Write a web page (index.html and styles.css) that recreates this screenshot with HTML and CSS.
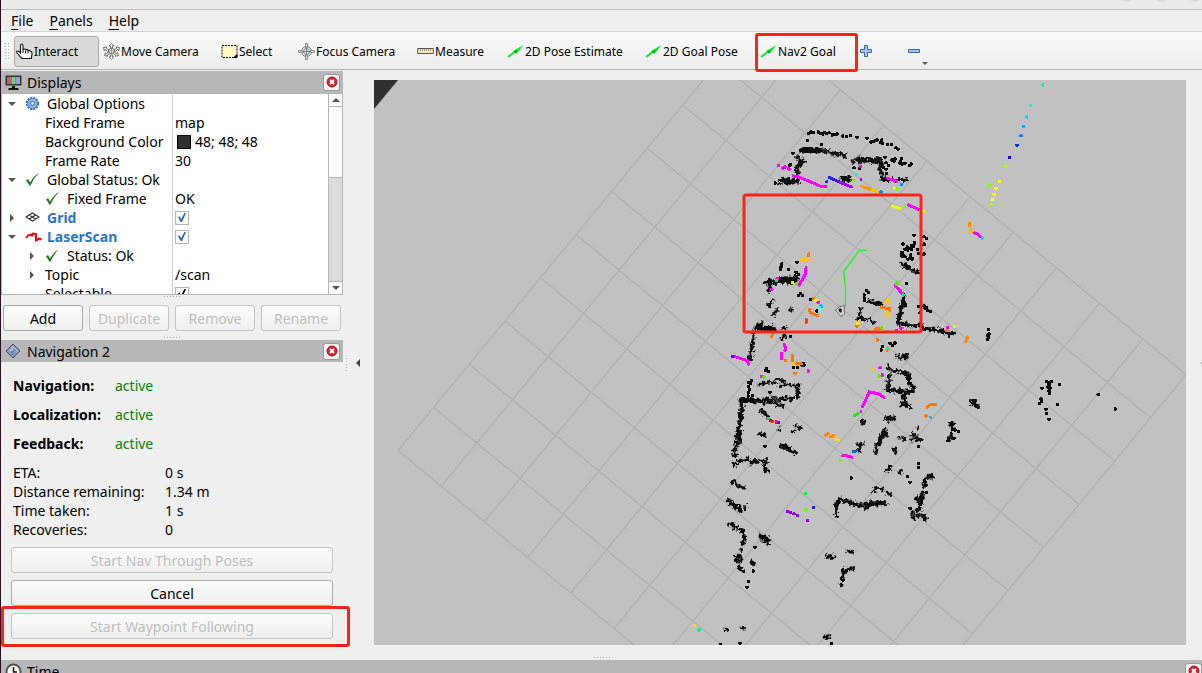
FILE: index.html
```html
<!DOCTYPE html>
<html lang="en">
<head>
<meta charset="utf-8">
<title>RViz</title>
<link rel="stylesheet" href="styles.css">
</head>
<body>
<div class="titlebar"><i></i><i></i><i></i></div>
<nav class="menubar">
  <button type="button"><u>F</u>ile</button>
  <button type="button"><u>P</u>anels</button>
  <button type="button"><u>H</u>elp</button>
</nav>
<div class="toolbar">
  <span class="grip"></span>
  <button type="button" class="tool pressed">
    <svg class="tool-icon" viewBox="0 0 17 17"><path d="M4.500 10V2.500q0-1.500 1.200-1.500t1.300 1.500V7q0-1 1.200-1t1.300 1v.6q0-1 1.200-1t1.300 1v.6q0-.9 1.200-.9t1.200 1q1.600.300 1.600 2l-.6 5.200H6L3.500 13 .8 9.500q-.4-1.200.7-1.500t1.800.7z" fill="#fff" stroke="#111" stroke-width="1.100"/><path d="M7 7v3M9.500 8v2.500M12 8v2.500" stroke="#111"/></svg>Interact</button>
  <button type="button" class="tool">
    <svg class="tool-icon" viewBox="0 0 17 17"><g fill="#f4f4f4" stroke="#555" stroke-width=".8"><path d="M8.500.5 11 3H9.500v2h-2V3H6zM8.500 16.500 11 14H9.500v-2h-2v2H6zM.5 4.500l3.500-.5-.8 1.200L6 7 5 8.500 2 6.500 1.300 8zM16.500 4.500 13 4l.8 1.200L11 7l1 1.500 3-2 .7 1.500zM1.500 12.500l1-3 .8 1.200L6 9l1 1.500-2.800 1.700.8 1zM15.500 12.500l-1-3-.8 1.200L11 9l-1 1.500 2.800 1.700-.8 1z"/><circle cx="8.500" cy="8" r="2.800"/></g><path d="M5.700 8h5.600M8.500 5.200v5.600" stroke="#777" stroke-width=".7"/></svg>Move Camera</button>
  <button type="button" class="tool">
    <svg class="tool-icon" viewBox="0 0 17 17"><path d="M1 2.500h15v12H1z" fill="#fdf8bd" stroke="#111" stroke-dasharray="2 1"/><path d="M13 14.500h3v-3z" stroke="#000"/></svg>Select</button>
  <button type="button" class="tool">
    <svg class="tool-icon" viewBox="0 0 17 17"><g fill="none" stroke="#777"><circle cx="8.500" cy="8.500" r="5"/><circle cx="8.500" cy="8.500" r="3"/><path d="M5 8.500h7M8.500 5v7"/></g><path d="M7.500.5h2v4h-2zM7.500 12.500h2v4h-2zM.5 7.500h4v2h-4zM12.500 7.500h4v2h-4z" fill="#ddd" stroke="#777" stroke-width=".8"/></svg>Focus Camera</button>
  <button type="button" class="tool">
    <svg class="tool-icon" viewBox="0 0 17 17"><path d="M.7 5.500h15.600v5H.7z" fill="#f1e9ae" stroke="#555"/><path d="M3.500 6v2M5.500 6v2M7.500 6v2M9.500 6v2M11.500 6v2M13.500 6v2" stroke="#777" stroke-width=".7"/></svg>Measure</button>
  <button type="button" class="tool">
    <svg class="tool-icon" viewBox="0 0 17 17"><path d="M1 14 7.500 9" stroke="#00f02a" stroke-width="2"/><path d="M6 8 16.500 2 9.500 11z" fill="#00f02a"/><path d="M7 9 10 7 9 10z" fill="#077d20"/></svg>2D Pose Estimate</button>
  <button type="button" class="tool">
    <svg class="tool-icon" viewBox="0 0 17 17"><path d="M1 14 7.500 9" stroke="#00f02a" stroke-width="2"/><path d="M6 8 16.500 2 9.500 11z" fill="#00f02a"/><path d="M7 9 10 7 9 10z" fill="#077d20"/></svg>2D Goal Pose</button>
  <button type="button" class="tool marked">
    <svg class="tool-icon" viewBox="0 0 17 17"><path d="M1 14 7.500 9" stroke="#00f02a" stroke-width="2"/><path d="M6 8 16.500 2 9.500 11z" fill="#00f02a"/><path d="M7 9 10 7 9 10z" fill="#077d20"/></svg>Nav2 Goal</button>
  <button type="button" class="tool" aria-label="Add tool">
    <svg class="tool-icon" viewBox="0 0 17 17"><path d="M5.500 2.500h3v4h4v3h-4v4h-3v-4h-4v-3h4z" fill="#a9c8ee" stroke="#3465a4"/></svg></button>
  <button type="button" class="tool drop" aria-label="Remove tool">
    <svg class="tool-icon" viewBox="0 0 17 17"><path d="M1.500 6.500h11v3h-11z" fill="#a9c8ee" stroke="#3465a4"/></svg><span class="arrow down"></span></button>
</div>

<main class="workspace">
  <aside class="sidebar">
    <section class="displays">
      <header class="dock-title">
        <svg class="dock-icon" viewBox="0 0 17 17"><path d="M.5 1.500h16v10H.5z" fill="#333"/><path d="M2 3h4.500v7H2z" fill="#b66"/><path d="M6.500 3h4v7h-4z" fill="#7c8"/><path d="M10.500 3H15v7h-4.500z" fill="#99d"/><path d="M7 12h3v2h3l1 2H3l1-2h3z" fill="#111"/></svg>
        <h2>Displays</h2>
        <button type="button" class="close" aria-label="Close Displays"><svg viewBox="0 0 12 12"><circle cx="6" cy="6" r="5" fill="#d22630" stroke="#a8131c"/><path d="m4 4 4 4M8 4 4 8" stroke="#fff" stroke-width="1.800"/></svg></button>
      </header>
      <div class="tree">
        <div class="rows">
          <div class="row"><div class="name"><span class="arrow down"></span><svg class="node" viewBox="0 0 15 15"><circle cx="7.500" cy="7.500" r="5.700" fill="none" stroke="#3b6fb6" stroke-width="2" stroke-dasharray="2 1"/><circle cx="7.500" cy="7.500" r="5" fill="#8db4e6" stroke="#3b6fb6" stroke-width=".8"/><circle cx="7.500" cy="7.500" r="2" fill="#dce9f8" stroke="#3b6fb6"/></svg>Global Options</div><div class="value"></div></div>
          <div class="row"><div class="name leaf">Fixed Frame</div><div class="value">map</div></div>
          <div class="row"><div class="name leaf">Background Color</div><div class="value"><span class="swatch"></span>48; 48; 48</div></div>
          <div class="row"><div class="name leaf">Frame Rate</div><div class="value">30</div></div>
          <div class="row"><div class="name"><span class="arrow down"></span><svg class="node" viewBox="0 0 15 15"><path d="M1 8.500 3 7l2 3.500Q9 4 14 .8 9 6 5.500 13.500H4.200Q3 10.500 1 8.500z" fill="#1c7a1f"/></svg>Global Status: Ok</div><div class="value"></div></div>
          <div class="row"><div class="name deep"><span class="arrow none"></span><svg class="node" viewBox="0 0 15 15"><path d="M1 8.500 3 7l2 3.500Q9 4 14 .8 9 6 5.500 13.500H4.200Q3 10.500 1 8.500z" fill="#1c7a1f"/></svg>Fixed Frame</div><div class="value">OK</div></div>
          <div class="row"><div class="name display"><span class="arrow right"></span><svg class="node" viewBox="0 0 15 15"><path d="m1 7 6.500-4L14 7l-6.500 4zM4.200 5l6.500 4M10.700 5 4.200 9" fill="none" stroke="#333" stroke-width="1.100"/></svg><label for="grid">Grid</label></div><div class="value"><input type="checkbox" id="grid" checked></div></div>
          <div class="row"><div class="name display"><span class="arrow down"></span><svg class="node wide" viewBox="0 0 17 15"><path d="M1 9 3 6.500 5.500 5.500 7 6.500 8 4.500 11 5V11.500L13 10.500 14 9.500 16.500 10.500" fill="none" stroke="#f00" stroke-width="2"/></svg><label for="laser">LaserScan</label></div><div class="value"><input type="checkbox" id="laser" checked></div></div>
          <div class="row"><div class="name deep"><span class="arrow right"></span><svg class="node" viewBox="0 0 15 15"><path d="M1 8.500 3 7l2 3.500Q9 4 14 .8 9 6 5.500 13.500H4.200Q3 10.500 1 8.500z" fill="#1c7a1f"/></svg>Status: Ok</div><div class="value"></div></div>
          <div class="row"><div class="name topic"><span class="arrow right"></span>Topic</div><div class="value">/scan</div></div>
          <div class="row"><div class="name leaf"><label for="selectable">Selectable</label></div><div class="value"><input type="checkbox" id="selectable" class="dark" checked></div></div>
        </div>
        <div class="scrollbar"><span class="step"><i class="arrow up"></i></span><span class="thumb"></span><span class="step last"><i class="arrow down"></i></span></div>
      </div>
      <span class="dots"></span>
      <div class="actions">
        <button type="button" class="btn">Add</button>
        <button type="button" class="btn" disabled>Duplicate</button>
        <button type="button" class="btn" disabled>Remove</button>
        <button type="button" class="btn" disabled>Rename</button>
      </div>
    </section>
    <span class="dots"></span>
    <section class="navigation">
      <header class="dock-title">
        <svg class="dock-icon" viewBox="0 0 17 17"><path d="m8 1 7 7-7 7-7-7z" fill="#8497bd" stroke="#3c4f78"/><path d="m8 3 5 5-5 .5L4 8z" fill="#b5c2dc"/><path d="m9 5-2 7M6 9l5-2" stroke="#6378a4"/></svg>
        <h2>Navigation 2</h2>
        <button type="button" class="close" aria-label="Close Navigation 2"><svg viewBox="0 0 12 12"><circle cx="6" cy="6" r="5" fill="#d22630" stroke="#a8131c"/><path d="m4 4 4 4M8 4 4 8" stroke="#fff" stroke-width="1.800"/></svg></button>
      </header>
      <dl class="status"><dt>Navigation:</dt><dd>active</dd><dt>Localization:</dt><dd>active</dd><dt>Feedback:</dt><dd>active</dd></dl>
      <dl class="metrics"><dt>ETA:</dt><dd>0 s</dd><dt>Distance remaining:</dt><dd>1.34 m</dd><dt>Time taken:</dt><dd>1 s</dd><dt>Recoveries:</dt><dd>0</dd></dl>
      <div class="commands">
        <button type="button" class="btn" disabled>Start Nav Through Poses</button>
        <button type="button" class="btn">Cancel</button>
        <div class="marked-command"><button type="button" class="btn" disabled>Start Waypoint Following</button></div>
      </div>
    </section>
  </aside>
  <div class="splitter"><span class="grip"></span><span class="arrow left"></span></div>
  <div class="view">
    <svg class="map" viewBox="374 80 812 565" preserveAspectRatio="xMidYMid slice" role="img" aria-label="Map view">
      <defs>
        <filter id="ragged" x="-10%" y="-10%" width="120%" height="120%">
          <feTurbulence type="fractalNoise" baseFrequency=".11" numOctaves="2" seed="4"/>
          <feDisplacementMap in="SourceGraphic" scale="22" xChannelSelector="R" yChannelSelector="G"/>
        </filter>
      </defs>
      <path d="M374 80h24l-24 29z" fill="#303030"/>
      <g transform="matrix(43.2 35.6 -35.6 43.2 754 18.6)"><path d="M0 0H10M0 1H10M0 2H10M0 3H10M0 4H10M0 5H10M0 6H10M0 7H10M0 8H10M0 9H10M0 10H10M0 0V10M1 0V10M2 0V10M3 0V10M4 0V10M5 0V10M6 0V10M7 0V10M8 0V10M9 0V10M10 0V10" fill="none" stroke="#b0b0b0" stroke-width=".024"/></g>

      <g class="scan" transform="translate(700 80) scale(.3333)">
        <path class="dot" d="M325 160h0M332 156h0M340 157h0M355 156h0M362 161h0M368 162h0M374 157h0M380 160h0M387 158h0M397 165h0M404 163h0M412 162h0M428 168h0M440 170h0M452 167h0M471 172h0M501 175h0M512 186h0M520 185h0M526 182h0M532 180h0M545 180h0M541 188h0M548 190h0M563 193h0M575 193h0M588 203h0M594 208h0M322 181h0M365 194h0M279 220h0M272 254h0M268 258h0M226 309h0M462 263h0M479 266h0M555 232h0M558 248h0M565 257h0M550 262h0M558 268h0M560 280h0M575 240h0M583 243h0M585 237h0M604 236h0M601 244h0M600 250h0M606 252h0M615 250h0M634 252h0M628 256h0"/>
        <path class="rough" d="m300 212 30-3 28 2 22 2 22 10 20-2 18 12"/><path class="rough" d="m310 205 30 2 22 4 16 6M308 216l22 1 30-1"/>
        <path class="rough" d="m292 232 10 10 12 0-16 10-6 12-2 12 6 6M238 303l16-3 16 4 24-2M246 300l8 8 20 0 18-4"/>
        <path class="rough" d="m458 243 22-8 24 6 20-2 16 0 3 12-4 16 6 12M478 246l26-6 18 6 22-4M548 292l6 8 20 0 18 2 14-3 20 2M548 300l10-6M425 293l12-2 14 3-6 8-18-4M440 300l12-4"/>
        <path class="dot" d="M642 466h0M672 470h0M679 475h0M609 492h0M643 490h0M673 492h0M622 501h0M627 506h0M618 507h0M635 505h0M652 508h0M655 520h0M606 517h0M604 523h0M612 528h0M670 523h0M630 533h0M624 538h0M636 537h0"/>
        <path class="shade" d="m366 204 35 24M457 243l24-18"/>
        <g stroke="#f0f"><path class="dot" d="M236 257h0M248 264h0M255 261h0M267 267h0M481 259h0"/><path class="laser" d="m280 288 16 3 25 10 20 9 24 10 12 0M563 295l26 8M625 375l37 16"/></g>
        <path class="laser" d="m387 292 18 8M380 305v0" stroke="#22f"/><path class="laser" d="m405 300 17 8" stroke="#50f"/><path class="laser" d="m422 308 33 13M483 299v0" stroke="#a0f"/>
        <path class="laser" d="m485 319 30 10" stroke="#f90"/><path class="laser" d="m515 329 20 7" stroke="#fb0"/>
        <path class="dot" d="M543 336h0M604 313h0" stroke="#08f"/><path class="dot" d="M470 284h0" stroke="#0fd"/><path class="dot" d="M462 301h0M591 327h0M615 380h0" stroke="#7f0"/><path class="laser" d="m578 379 22 7M583 324v0M671 394v0" stroke="#ef0"/>
      </g>

      <g class="scan" transform="translate(720 240) scale(.3333)">
        <path class="dot" d="M185 72h0M183 80h0M181 88h0M205 88h0M231 67h0M228 97h0M236 104h0M241 160h0M235 166h0M248 167h0M211 290h0M272 178h0M290 213h0M440 152h0M446 157h0M433 165h0M433 174h0M433 182h0M548 12h0M584 8h0M580 20h0M575 17h0M612 14h0M612 42h0M555 28h0M563 30h0M575 28h0M547 42h0M545 48h0M555 50h0M572 45h0M569 54h0M577 56h0M559 131h0M596 200h0M612 197h0M614 204h0M620 203h0M622 212h0M632 215h0M600 218h0M488 320h0M484 330h0M510 310h0M517 316h0M525 309h0M140 386h0M137 392h0M145 394h0M220 383h0M232 383h0M251 370h0M252 376h0M245 375h0M95 422h0M85 427h0M92 430h0M85 440h0M88 448h0M85 458h0M85 468h0M150 457h0M97 467h0"/>
        <path class="rough" d="m137 128 14-7 16 8 22-7 26 4 18-6M148 122l4 10-6 12 2 12M175 118l26-3 28 4M230 108l4 8"/>
        <path class="rough thin" d="m158 181-16 20M171 210l-19 20M217 207l-10 5M190 263l14 0M196 286l-13 12M482 190l-22 0-14-8M422 205l-2 18-5 12M415 235l26 2 25 12"/>
        <path class="rough" d="m128 248-22 18 26 4 30-2M110 256l16 8 36 0M100 280l0 22-6 18 0 20-5 18M546 72l16 8 16 12 22 6M553 167l-2 14-8 10M552 190l-8 12 0 14-6 14-3 18M556 198l-16 4M535 248l24 8 26 0 18-2 6 12 26 2 26 4M665 272l20 10 14 0"/>
        <path class="rough thin" d="m530 348 15 4 18-10M550 348l-14 12M557 356l5-8"/>
        <path class="rough" d="m505 382 12 10 24 2 22 10 2 20M568 404l-1 22 16 20-12 10-22-2-24-3-28-1 8-18 3-28M550 456l5 14-2 16-10 14M551 490l8 5 10 6M556 462l-10 10"/>
        <path class="rough sparse" d="m118 434 24-8 18 2 16-13 16 10M180 437l30-4 16 6"/>
        <path class="rough" d="m235 436-4 12 4 12-1 14M67 480l22 0 20 4 20-4 20-4 22 2 24-2 30 0M64 482l2 22-4 16 2 18"/>
        <path class="rough thin" d="m120 484 36 4 34 12M125 514l22 18M500 535l12-3 12 4"/>
        <path class="shade" d="m150 464 32 28M500 440l12-40M566 88l16 8"/>
        <g stroke="#f0f"><path class="laser" d="m258 83 0 16-20 36M526 137l22 25M86 372l-4-10-37-12M193 314l4 10-2 8M185 340v16M428 500l6-14 14-30 26 5 18 11M423 515v0"/><path class="dot" d="M155 148h0M294 187h0M543 265h0M530 272h0M265 393h0M480 383h0M487 405h0M125 410h0M683 263h0M172 115h0"/></g>
        <g stroke="#f70"><path class="laser" d="m266 41 0 7M268 208l3 10 22 9M484 203l24 2M467 266l12 0M158 284l-4 6M217 347v16M228 371h16"/><path class="dot" d="M280 176h0M509 210h0M411 258h0M472 300h0M502 330h0M196 361h0M225 400h0M681 272h0M618 528h0"/><path class="laser" d="m622 502 7-7 18-1"/></g>
        <path class="laser" d="m243 60 22-3M503 178v12M503 216v12M417 245v0M456 388v0M217 371v0" stroke="#fc0"/>
        <path class="dot" d="M218 128h0M288 181h0M703 259h0M413 250h0" stroke="#fe0"/><path class="dot" d="M230 132h0M533 127h0M485 264h0M478 408h0M132 411h0M529 132h0" stroke="#5e0"/><path class="laser" d="m402 527 13-6" stroke="#1e0"/>
        <path class="dot" d="M170 121h0M502 326h0M550 165h0" stroke="#0e8"/><path class="laser" d="m303 196 1 6M632 532v0" stroke="#0bf"/><path class="dot" d="M300 207h0" stroke="#4fd"/><path class="dot" d="M259 240h0M259 246h0" stroke="#f31"/><path class="dot" d="M37 349h0" stroke="#22f"/>
        <path d="M440 31 418 31 371 95 377 150 376 197" fill="none" stroke="#1f1" stroke-width="4"/>
        <path d="m346 211 12-11 16-3-2 12 2 12-12 8-6-8z" fill="#d8d8d8" stroke="#555" stroke-width="3" stroke-dasharray="5 4"/><path d="m355 208 6-4 5 5-2 9-6-1z" fill="#111" stroke="none"/>
      </g>

      <g class="scan" transform="translate(700 370) scale(.3333)">
        <path class="rough" d="m125 90 0 24-4 24-2 24-6 24 2 24-8 20-4 12M121 185l-6 20 4 16M103 288l0-10M103 252l12 6M152 280l10-8 8 4M243 228l14 8 14 2 16 12M257 228l18 14M86 391l14 12 14 8 10 14M92 400l16 14 12-2M180 192l16 4-10 4"/>
        <path class="rough thin" d="m100 285 16-10 14-2 14-8M183 273l16 5 1-14M193 290l2 10 12 6M183 122l20 14M278 184l8-4M290 168l14 8M238 178l5 4M98 333l12 10 14 10 12 1M135 408v12M490 153v10M484 158h10M560 150l14-8 14 10M600 203l16 3M655 174v4M638 190l10 12 12 6 6 6M633 212l14-16M583 235l2 10 7 6M472 222l18-1M560 302l10-12 6 14M598 308l6-4M671 350l3-22 10-8 16 0M520 362l12-10 12 4 4 6M562 368l14 8"/>
        <path class="rough" d="m557 180-12 12-4 16-10 18-4 24M552 184l-6 22-10 18M558 186l6 20M480 222l-2 14 6 12M757 158l0 18-4 18-4 14M752 165l12 0M408 434l0-32 12-14 18 6 14 2 14 8 16 2 18 6 14-12 28 0 16-2M450 394l14 12 18-4M490 408l20-12"/>
        <path class="dot" d="M655 229h0M622 320h0M630 337h0M655 281h0M655 293h0M454 324h0M195 229h0M765 180h0M775 185h0M762 205h0M744 212h0M680 368h0M665 373h0M663 382h0M650 385h0M654 391h0M665 396h0M662 404h0M658 415h0M631 415h0M650 420h0"/>
        <path class="shade" d="m106 205 20 16M225 85l18 16M637 205l18-12"/>
        <path class="dot" d="M205 145h0" stroke="#0e2"/><path class="dot" d="M211 151h0M236 158h0M340 412h0" stroke="#12f"/><path class="dot" d="M216 154h0M229 156h0" stroke="#f11"/>
        <path class="laser" d="m377 195 7-5M390 201l2 0 10-5" stroke="#f80"/><path class="laser" d="m410 209 7 2" stroke="#fd0"/><path class="laser" d="m460 245 7-1" stroke="#06f"/><path class="laser" d="m428 257 14 1 14 4" stroke="#f0f"/>
        <path class="dot" d="M422 272h0M318 420h0" stroke="#6f0"/><path class="dot" d="M316 370h0" stroke="#0f2"/><path class="dot" d="M262 424h0M272 428h0M282 431h0M292 436h0M323 451h0" stroke="#80f"/>
      </g>

      <g class="scan" transform="translate(680 480) scale(.3333)">
        <path class="rough" d="m147 133 9-3 10 14 16 4 10 8 0 18-3 18M174 144l14 10M180 262l8 8-8 4M242 170l10 10 12 10M252 168l18 16M218 248l3 12M492 270l-2 14-2 14M484 315l6 0M698 100l4 8-4 10M733 110l6 8M726 38l-2 16-4 18-2 16M710 55l16 10"/>
        <path class="rough thin" d="m184 210 5-4M166 230h16M168 242l14-2-6 10M440 230l10-2 12 3-12 4M504 215l16 0-8 6M496 274l12-4 4-6 8 3M139 448l10 6M186 443l10 5M436 472l8-4 12-1M712 105h20"/>
        <path class="dot" d="M225 202h0M220 273h0M205 304h0M201 322h0M180 490h0M122 494h0M455 490h0M690 7h0M735 6h0M738 16h0M734 0h0M740 38h0M690 85h0M489 301h0"/>
        <path class="shade" d="m696 110 6-12M540 66l14 12M248 184l-8-8"/>
        <path class="dot" d="M43 437h0" stroke="#fd0"/><path class="dot" d="M57 450h0" stroke="#0f6"/>
      </g>

      <g class="scan" transform="translate(900 80) scale(.3333)">
        <path class="dot" d="M440 905h0M447 908h0M454 904h0M447 916h0M444 922h0M451 924h0M447 932h0M448 940h0M479 913h0M426 925h0M423 956h0M424 965h0M419 971h0M438 988h0M440 1001h0M447 1018h0M472 974h0M595 944h0M646 987h0M265 748h0M267 762h0M262 766h0M266 773h0M263 779h0M175 1055h0"/>
        <path class="rough" d="m210 965 10 8 16 10M222 960l10 14"/>
        <path class="dot" d="M428 15h0" stroke="#00ff9c"/><path class="dot" d="M392 77h0" stroke="#00ffe0"/><path class="dot" d="M380 111h0M247 474h0" stroke="#00d8ff"/><path class="dot" d="M371 140h0" stroke="#00a8ff"/><path class="dot" d="M363 167h0" stroke="#0084ff"/><path class="dot" d="M351 196h0" stroke="#0028ff"/><path class="dot" d="M328 233h0" stroke="#1800ff"/>
        <path class="dot" d="M317 259h0M274 373h0" stroke="#af0"/><path class="dot" d="M268 315h0" stroke="#7f0"/><path class="dot" d="M298 304h0M288 325h0M282 343h0M278 358h0" stroke="#ff0"/>
        <path class="laser" d="m209 429 0 10M203 771l-6 14" stroke="#f80"/><path class="laser" d="m211 446 4 10" stroke="#fb0"/><path class="laser" d="m223 459 8 2 8 8" stroke="#f0f"/>
      </g>
      <rect class="callout" x="744" y="195" width="177" height="137" rx="2"/>
    </svg>
  </div>
  <div class="edge"><span class="arrow left"></span></div>
</main>
<footer class="time">
  <span class="dots"></span>
  <div class="dock-title">
    <svg class="dock-icon" viewBox="0 0 17 17"><circle cx="8.500" cy="8.500" r="7" fill="#fff" stroke="#555" stroke-width="2"/><path d="M8.500 4v5H12" fill="none" stroke="#111" stroke-width="1.500"/></svg>
    <h2>Time</h2>
    <button type="button" class="close" aria-label="Close Time"><svg viewBox="0 0 12 12"><circle cx="6" cy="6" r="5" fill="#d22630" stroke="#a8131c"/><path d="m4 4 4 4M8 4 4 8" stroke="#fff" stroke-width="1.800"/></svg></button>
  </div>
</footer>
</body>
</html>
```
FILE: styles.css
```css
* { box-sizing: border-box; }
body {
  margin: 0;
  height: 100vh;
  overflow: hidden;
  display: flex;
  flex-direction: column;
  border-left: 1px solid #2c0a22;
  background: #efefef;
  color: #000;
  font: 14px/19px "Noto Sans", "Open Sans", sans-serif;
}
button { font: inherit; color: inherit; margin: 0; padding: 0; border: 0; background: none; }
h2, dl, dd { margin: 0; font-size: inherit; font-weight: 400; }
svg { display: block; flex: none; }

.titlebar {
  flex: none;
  height: 10px;
  display: flex;
  justify-content: flex-end;
  gap: 20px;
  overflow: hidden;
  background: #ebebeb;
  border-bottom: 1px solid #b9b9b9;
}
.titlebar i { width: 14px; height: 14px; margin-top: -12px; border-radius: 50%; background: #d9d9d9; }

.menubar {
  flex: none;
  height: 22px;
  display: flex;
  gap: 16px;
  padding-left: 10px;
  align-items: center;
  border-bottom: 1px solid #d2d2d2;
}
.menubar u { text-underline-offset: 3px; }

.toolbar {
  flex: none;
  height: 38px;
  display: grid;
  grid-template-columns: 10px 87px 118px 77px 119px 90px 138px 115px 99px 48px 30px;
  padding: 1px 0 0 3px;
  align-items: center;
  background: linear-gradient(#fafafa, #ededed);
  border-bottom: 1px solid #b4b4b4;
  font-size: 12px;
}
.grip {
  width: 6px;
  height: 18px;
  background: radial-gradient(circle, #b5b5b5 35%, transparent 40%) 0 0 / 3px 3px;
}
.tool {
  position: relative;
  height: 31px;
  display: flex;
  align-items: center;
  gap: 1px;
  padding: 0 1px;
  border: 1px solid transparent;
  border-radius: 3px;
  white-space: nowrap;
}
.tool-icon { width: 17px; height: 17px; }
.pressed { width: 85px; background: #dadada; border-color: #a9a9a9; }
.marked::after {
  content: "";
  position: absolute;
  inset: -4px -2px -6px -4px;
  border: 3px solid #ff2415;
  border-radius: 3px;
}
.drop { gap: 0; }
.drop .arrow { align-self: flex-end; margin: 0 0 1px -2px; }

.arrow { flex: none; width: 0; height: 0; border: 4px solid transparent; }
.arrow.down { border-top-color: #555; border-bottom-width: 0; }
.arrow.up { border-bottom-color: #555; border-top-width: 0; }
.arrow.right { border-left-color: #555; border-right-width: 0; margin: 0 2px; }
.arrow.left { border-right-color: #444; border-left-width: 0; }
.toolbar .arrow { border-width: 3px 3px 0; }

.workspace { flex: 1; min-height: 0; display: flex; }
.sidebar { flex: none; width: 342px; display: flex; flex-direction: column; padding: 1px 0 9px; }
.displays { flex: 1; min-height: 0; display: flex; flex-direction: column; }
.dock-title {
  flex: none;
  height: 22px;
  display: flex;
  align-items: center;
  gap: 5px;
  padding: 0 3px 0 4px;
  background: #b7b7b7;
}
.dock-title h2 { flex: 1; }
.dock-icon { width: 17px; height: 17px; }
.close {
  width: 17px;
  height: 17px;
  display: grid;
  place-items: center;
  border: 1px solid #999;
  border-radius: 3px;
  background: #f6f6f6;
}
.close svg { width: 12px; height: 12px; }

.tree {
  flex: 1;
  min-height: 0;
  display: flex;
  overflow: hidden;
  background: #fff;
  border: 1px solid #b4b4b4;
}
.rows { flex: 1; }
.row { height: 19px; display: grid; grid-template-columns: 171px 1fr; white-space: nowrap; }
.name { display: flex; align-items: center; gap: 6px; padding-left: 6px; border-right: 1px solid #d0d0d0; }
.name .arrow + svg { margin-left: 3px; margin-right: 1px; }
.leaf { padding-left: 43px; }
.deep { padding-left: 26px; }
.topic { padding-left: 26px; gap: 9px; }
.display { color: #2a76c6; font-weight: 700; }
.node { width: 15px; height: 15px; }
.name .arrow + .wide { width: 17px; margin-right: -1px; }
.value { display: flex; align-items: center; gap: 4px; padding-left: 2px; }
.swatch { width: 14px; height: 14px; margin-left: 2px; background: #303030; border: 1px solid #000; }
.value input {
  appearance: none;
  width: 14px;
  height: 14px;
  margin: 0;
  display: grid;
  place-items: center;
  border: 1px solid #b4b4b4;
  background: #fff;
  color: #2468ad;
}
.value input:checked::before {
  content: "";
  width: 8px;
  height: 9px;
  background: currentColor;
  clip-path: polygon(0 45%, 22% 38%, 40% 70%, 80% 0, 100% 0, 50% 100%, 32% 100%);
}
.value .dark { color: #000; }
.scrollbar { flex: none; width: 14px; display: flex; flex-direction: column; background: #dcdcdc; border-left: 1px solid #b4b4b4; }
.step { flex: none; height: 13px; display: grid; place-items: center; background: #fafafa; border-bottom: 1px solid #b4b4b4; }
.last { margin-top: auto; border: 0; border-top: 1px solid #b4b4b4; }
.thumb { height: 71px; background: #fbfbfb; border-bottom: 1px solid #b4b4b4; }

.dots {
  flex: none;
  align-self: center;
  width: 18px;
  height: 3px;
  background: radial-gradient(circle, #aaa 35%, transparent 40%) 0 0 / 3px 3px;
}
.actions { display: grid; grid-template-columns: repeat(4, 1fr); gap: 6px; padding: 7px 2px 5px; }
.btn {
  height: 26px;
  border: 1px solid #a8a8a8;
  border-radius: 3px;
  background: linear-gradient(#fcfcfc, #efefef);
}
.btn:disabled { color: #bebebe; border-color: #c4c4c4; }
.navigation { flex: none; padding-top: 1px; }
.status { display: grid; grid-template-columns: 102px 1fr; line-height: 29px; padding: 9px 12px 5px; }
.status dt { font-weight: 700; }
.status dd { color: #008500; }
.metrics { display: grid; grid-template-columns: 152px 1fr; padding: 0 12px 8px; }
.commands { display: grid; gap: 7px; padding: 0 10px 8px; }
.marked-command { position: relative; display: grid; }
.marked-command::after {
  content: "";
  position: absolute;
  inset: -7px -17px -8px -10px;
  border: 3px solid #ff2415;
  border-radius: 3px;
}

.splitter { flex: none; width: 31px; display: flex; align-items: center; gap: 8px; padding: 0 2px; }
.splitter .grip { width: 3px; }
.view { flex: 1; min-width: 0; padding: 10px 0 11px; }
.map { width: 100%; height: 100%; background: #c1c1c1; }
.edge { flex: none; width: 16px; display: flex; align-items: center; justify-content: flex-end; overflow: hidden; }
.edge .arrow { margin-right: -3px; }
.scan { fill: none; stroke: #0c0c0c; stroke-linecap: round; }
.dot { stroke-width: 11; shape-rendering: crispEdges; }
.rough { stroke-width: 13; stroke-dasharray: 0 7; filter: url(#ragged); }
.thin { stroke-width: 11; }
.sparse { stroke-width: 11; stroke-dasharray: 0 9; }
.laser { stroke-width: 9; shape-rendering: crispEdges; }
.shade { stroke: #555; stroke-width: 4; opacity: .7; }
.callout { fill: none; stroke: #ff2415; stroke-width: 3; }

.time { flex: none; height: 17px; overflow: hidden; display: flex; flex-direction: column; }
.time .dock-title { margin-top: 1px; padding-right: 0; }
```
